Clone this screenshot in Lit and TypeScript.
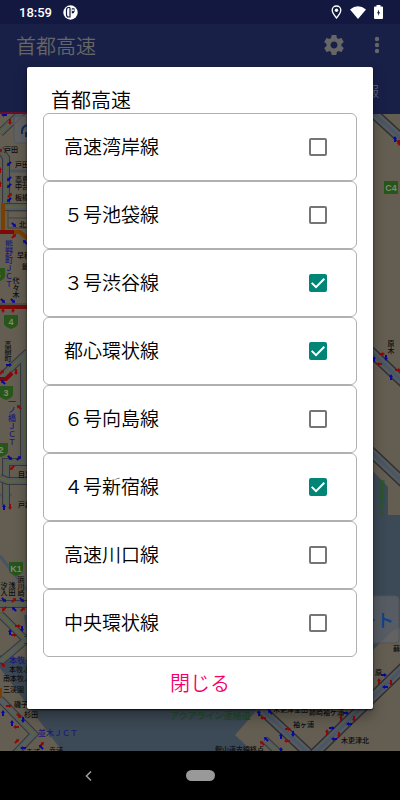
import { LitElement, html, svg, css } from "lit";
import { customElement, state, property } from "lit/decorators.js";

interface Route {
  name: string;
  shown: boolean;
}

type Arrow = [x: number, y: number, angle: number];
type Label = [x: number, y: number, text: string];

const RED_ARROWS: Arrow[] = [
  [10, 122, 180], [0, 151, 45], [0, 170, 0], [0, 184, 0], [10, 195, 45],
  [14, 236, 45], [3, 310, 180], [13, 310, 180], [2, 372, 45], [16, 372, 180],
  [19, 407, -45], [12, 468, 225], [10, 507, 180], [14, 600, 45], [4, 609, 225],
  [23, 609, 45], [18, 626, 90], [14, 635, 90], [3, 665, 135], [9, 706, 90],
  [19, 716, 135], [16, 727, 270], [17, 741, 45], [42, 744, 45], [399, 143, 180],
  [382, 354, 90], [379, 364, 270], [398, 370, 90], [379, 681, 0], [391, 683, 180],
  [341, 718, 0], [354, 719, 180], [327, 732, 0], [339, 735, 180], [288, 729, 90],
  [287, 741, 270], [263, 718, 270], [262, 743, -45],
];

const BLUE_ARROWS: Arrow[] = [
  [4, 115, 270], [9, 164, 225], [9, 179, 225], [9, 186, 225], [9, 200, 225],
  [14, 225, 135], [25, 242, 315], [3, 301, 135], [13, 301, 135], [9, 365, 90],
  [3, 382, 315], [10, 458, 135], [19, 458, 45], [4, 507, 0], [4, 600, 135],
  [22, 600, 135], [14, 609, 315], [22, 629, 180], [10, 632, 0], [3, 713, 0],
  [12, 723, 0], [23, 720, 180], [23, 748, 270], [41, 747, 315], [395, 139, 0],
  [374, 359, 0], [386, 358, 180], [391, 377, 0], [384, 675, 90], [385, 687, 270],
  [346, 713, 90], [349, 724, 270], [332, 728, 90], [334, 739, 270], [281, 736, 0],
  [293, 734, 180], [259, 713, 0], [270, 712, 315], [266, 739, 315], [281, 750, 0],
];

const PLACES: Label[] = [
  [4, 152, "戸田"], [15, 167, "戸田南"], [15, 182, "高島平"], [15, 189, "中台"],
  [15, 200, "板橋本町"], [19, 227, "北池袋"], [17, 258, "早稲田"], [22, 269, "飯田橋"],
  [18, 477, "目黒"], [18, 507, "戸越"], [9, 672, "本牧ふ頭"], [3, 681, "南本牧ふ頭"],
  [3, 692, "三渓園"], [14, 707, "磯子"], [24, 717, "杉田"], [49, 753, "幸浦"],
  [26, 755, "幸浦"], [393, 651, "蘇我"], [375, 675, "原"], [273, 712, "木更津金田"],
  [309, 715, "姉崎袖ケ浦"], [293, 727, "袖ヶ浦"], [341, 743, "木更津北"],
  [215, 752, "館山道支線終点"],
];

const UPRIGHT_PLACES: Label[] = [
  [16, 277, "代々木"], [8, 341, "高樹町"], [4, 582, "汐入"], [12, 582, "浅田"],
  [21, 576, "浜川崎"], [391, 340, "原木"],
];

const upright = ([x, y, text]: Label, kind = "place") =>
  svg`<text class="upright ${kind}" x=${x} y=${y}>${text}</text>`;

const road = (d: string, kind = "wide") => svg`
  <path class="edge ${kind}" d=${d}></path>
  <path class="bed ${kind}" d=${d}></path>
  <path class="line ${kind}" d=${d}></path>`;

const arrow = (kind: string) => ([x, y, angle]: Arrow) => svg`
  <path class=${kind} d="M0-3L2 0H1V3H-1V0H-2Z"
    transform="translate(${x} ${y}) rotate(${angle})"></path>`;

const shield = (x: number, y: number, text: string) => svg`
  <path class="shield" transform="translate(${x} ${y})"
    d="M0 0H14V9Q13 12 7 14Q1 12 0 9Z"></path>
  <text class="number" x=${x + 7} y=${y + 10}>${text}</text>`;

@customElement("road-map")
export class RoadMap extends LitElement {
  static styles = css`
    :host { display: block; overflow: hidden; background: #645e52; }
    svg { display: block; width: 100%; height: 100%; }
    text { font: 500 7px "Noto Sans CJK JP", sans-serif; fill: #0c0c0c; }
    .upright { writing-mode: vertical-rl; text-orientation: upright; }
    .jct { font-size: 8px; fill: #1a1a7c; }
    .area { font-size: 6px; fill: #245a1c; }
    .aqua { font-size: 9px; fill: #1d4d22; }
    .number { font: 700 9px "Liberation Sans", sans-serif; fill: #7c8a70; text-anchor: middle; }
    .water { fill: #3c4956; }
    .shield { fill: #28561a; }
    .edge, .bed, .line, .river { fill: none; }
    .edge { stroke: #38383a; stroke-width: 8px; }
    .bed { stroke: #565b5e; stroke-width: 6px; }
    .line { stroke: #626b2e; stroke-width: 1px; }
    .edge.coast { stroke: #303034; stroke-width: 11px; }
    .bed.coast { stroke-width: 8px; }
    .line.coast { stroke: #4a5663; stroke-width: 3px; }
    .river { stroke: #48545f; stroke-width: 3px; }
    .orange { fill: none; stroke: #7a4000; stroke-width: 4px; }
    .jam { fill: none; stroke: #7c0a0a; stroke-width: 4px; }
    .frame { fill: none; stroke: #404040; stroke-width: 1px; }
    .red { fill: #8e0808; }
    .blue { fill: #0808a0; }
    .card { fill: #62646a; fill-opacity: 0.7; stroke: #50545a; }
    .action { font-size: 18px; fill: #0d4488; }
    .faint { font-size: 8px; fill: #4a4a74; }
    .reload { fill: none; stroke: #0d2f60; stroke-width: 2px; }
  `;

  render() {
    return html`
      <svg viewBox="0 114 400 637" preserveAspectRatio="xMidYMid slice" aria-hidden="true">
        <path class="water" d="M24 615L30 660L0 655V668L62 751H252L235 735L262 704L373 650L392 631L400 628V515H388V487L373 471L300 420V600Z"></path>
        <path class="river" d="M8 171H27M0 556L27 590M0 495H12"></path>
        ${road("M0 133L24 110")}
        ${road("M0 149L6 158V203")}
        ${road("M4 207H30")}
        <path class="frame" d="M8 211H30M8 211V228H30M8 218H30"></path>
        <path class="orange" d="M3 203V231M12 232L20 232L28 239"></path>
        <path class="jam" d="M0 232H14M0 307H28"></path>
        <path class="frame" d="M0 304H28"></path>
        ${road("M0 378L28 352M24 356V462H6V505")}
        <path class="jam" d="M0 379H6L12 373"></path>
        ${road("M0 478L8 481H28")}
        ${road("M0 604H28")}
        ${road("M0 614L26 640L0 662")}
        ${road("M24 640H30")}
        ${road("M0 699L34 734L14 755")}
        <path class="orange" d="M0 688V698"></path>
        ${road("M370 110L404 141", "coast")}
        ${road("M370 351L404 383", "coast")}
        ${road("M370 451L404 483", "coast")}
        ${road("M404 667L312 756", "coast")}
        ${road("M260 708L308 753", "coast")}
        ${road("M265 740L280 754")}
        <rect class="card" x="14" y="116" width="40" height="27" rx="3"></rect>
        <path class="reload" d="M28 125Q21 126 22 134M26 132V137"></path>
        <text class="faint" x="384" y="622">千葉</text>
        <rect class="card" x="340" y="596" width="59" height="47" rx="4"></rect>
        <text class="action" x="358" y="627">ート</text>
        ${RED_ARROWS.map(arrow("red"))} ${BLUE_ARROWS.map(arrow("blue"))}
        ${shield(-9, 268, "5")} ${shield(4, 315, "4")} ${shield(-1, 386, "3")}
        ${shield(-6, 443, "2")} ${shield(9, 562, "K1")}
        <rect class="shield" x="384" y="181" width="14" height="13" rx="1"></rect>
        <text class="number" x="391" y="191">C4</text>
        ${PLACES.map(([x, y, t]) => svg`<text x=${x} y=${y}>${t}</text>`)}
        ${UPRIGHT_PLACES.map((l) => upright(l))}
        ${upright([9, 240, "熊野町ＪＣＴ"], "jct")}
        ${upright([12, 398, "一ノ橋ＪＣＴ"], "jct")}
        ${upright([382, 480, "湾岸幕張ＰＡ"], "area")}
        <text class="jct" x="9" y="663">本牧ＪＣＴ</text>
        <text class="jct" x="38" y="736">並木ＪＣＴ</text>
        <text class="aqua" x="170" y="719">アクアライン連絡道</text>
      </svg>
    `;
  }
}

@customElement("route-row")
export class RouteRow extends LitElement {
  @property({ attribute: false }) route!: Route;

  static styles = css`
    :host { display: block; }
    .row {
      display: flex;
      align-items: center;
      justify-content: space-between;
      box-sizing: border-box;
      height: 68px;
      padding: 0 29px 0 20px;
      border: 1px solid #b0b0b0;
      border-radius: 6px;
      font-size: 19px;
      font-weight: 350;
      color: #000;
    }
    .name { line-height: 28px; padding-bottom: 2px; }
    .box {
      appearance: none;
      display: grid;
      place-items: center;
      box-sizing: border-box;
      flex: none;
      width: 18px;
      height: 18px;
      margin: 0;
      border: 2px solid #757575;
      border-radius: 2px;
      background: #fff;
    }
    .box:checked { border-color: #008577; background: #008577; }
    .box:checked::before {
      content: "";
      width: 14px;
      height: 14px;
      background: #fff;
      clip-path: polygon(0 54%, 10% 44%, 36% 69%, 90% 15%, 100% 25%, 36% 89%);
    }
  `;

  private toggle(e: Event) {
    const shown = (e.target as HTMLInputElement).checked;
    this.dispatchEvent(new CustomEvent("route-toggle", { detail: shown }));
  }

  render() {
    return html`
      <label class="row">
        <span class="name">${this.route.name}</span>
        <input class="box" type="checkbox" .checked=${this.route.shown} @change=${this.toggle} />
      </label>
    `;
  }
}

@customElement("app-root")
export class AppRoot extends LitElement {
  @state() private open = true;

  @state() private routes: Route[] = [
    { name: "高速湾岸線", shown: false },
    { name: "５号池袋線", shown: false },
    { name: "３号渋谷線", shown: true },
    { name: "都心環状線", shown: true },
    { name: "６号向島線", shown: false },
    { name: "４号新宿線", shown: true },
    { name: "高速川口線", shown: false },
    { name: "中央環状線", shown: false },
  ];

  static styles = css`
    :host {
      display: flex;
      flex-direction: column;
      position: relative;
      min-height: 100vh;
      font-family: "Noto Sans CJK JP", sans-serif;
    }
    button { padding: 0; border: 0; background: none; font: inherit; cursor: pointer; }
    svg { display: block; }
    .status {
      display: flex;
      align-items: center;
      gap: 11px;
      height: 24px;
      padding: 0 17px 0 19px;
      background: #12183f;
      color: #fff;
    }
    .time { padding-top: 2px; font: 500 13px/22px Roboto, sans-serif; }
    .signals { display: flex; align-items: center; gap: 8px; margin-left: auto; }
    .toolbar {
      display: flex;
      align-items: center;
      height: 42px;
      padding: 0 14px 0 16px;
      background: #192048;
      color: #666;
    }
    .heading {
      flex: 1;
      margin: 0;
      padding-top: 2px;
      font-size: 20px;
      font-weight: 350;
      line-height: 24px;
    }
    .tool { display: grid; place-items: center; height: 24px; color: inherit; }
    .gear { margin-right: 22px; }
    .tabs {
      display: grid;
      grid-template-columns: 1fr 1fr;
      height: 48px;
      background: #192048;
    }
    .tab { padding-right: 21px; color: #5a5e76; font-size: 14px; text-align: right; }
    .tab.current { border-bottom: 2px solid #66102e; }
    .map { flex: 1 1 0; min-height: 0; }
    .nav {
      display: grid;
      grid-template-columns: 1fr auto 1fr;
      align-items: center;
      height: 49px;
      background: #000;
    }
    .back { justify-self: end; margin-right: 87px; }
    .home { width: 29px; height: 11px; border-radius: 6px; background: #999; }
    .overlay {
      position: absolute;
      inset: 25px 0 49px;
      display: grid;
      align-items: center;
      padding: 0 27px;
    }
    .dialog {
      box-sizing: border-box;
      padding: 0 16px;
      border-radius: 2px;
      background: #fff;
      box-shadow: 0 8px 14px rgba(0, 0, 0, 0.3), 0 1px 2px rgba(0, 0, 0, 0.8);
    }
    .title {
      margin: 0;
      padding: 20px 8px 0;
      font-size: 20px;
      font-weight: 350;
      line-height: 26px;
      color: #000;
    }
    .close {
      display: block;
      width: 100%;
      height: 52px;
      padding-bottom: 2px;
      font-size: 20px;
      font-weight: 350;
      color: #f5006a;
    }
  `;

  private setShown(index: number, shown: boolean) {
    this.routes = this.routes.map((r, i) => (i === index ? { ...r, shown } : r));
  }

  render() {
    return html`
      <div class="status">
        <span class="time">18:59</span>
        <svg width="15" height="15" viewBox="0 0 15 15" aria-hidden="true">
          <circle cx="7.500" cy="7.500" r="7.200" fill="#fff"></circle>
          <path d="M7 2.500H5.500Q3.500 2.500 3.500 5V9.500Q3.500 12 5.500 12H7V2.500" fill="none" stroke="#12183f" stroke-width="1.200"></path>
          <path d="M8.800 3.300H11.500V6.500Q11.500 8.500 8.800 8.500Z" fill="#12183f"></path>
          <circle cx="10" cy="5.200" r="1" fill="#fff"></circle>
        </svg>
        <div class="signals">
          <svg width="11" height="14" viewBox="0 0 11 14" aria-hidden="true">
            <path d="M5.500 1C3 1 1.200 2.800 1.200 5.100C1.200 8 5.500 13 5.500 13S9.800 8 9.800 5.100C9.800 2.800 8 1 5.500 1Z" fill="none" stroke="#fff" stroke-width="1.300"></path>
            <circle cx="5.500" cy="5.200" r="1.700" fill="#fff"></circle>
          </svg>
          <svg width="16" height="13" viewBox="0 0 16 13" aria-hidden="true">
            <path d="M0 3.500Q8-3 16 3.500L8 13Z" fill="#fff"></path>
          </svg>
          <svg width="9" height="14" viewBox="0 0 9 14" aria-hidden="true">
            <path d="M2.500 0H6.500V1.500H8Q9 1.500 9 2.500V13Q9 14 8 14H1Q0 14 0 13V2.500Q0 1.500 1 1.500H2.500Z" fill="#fff"></path>
            <path d="M5 4.500L3 8.300H4.200V11L6 7.200H5Z" fill="#12183f"></path>
          </svg>
        </div>
      </div>

      <header class="toolbar">
        <h1 class="heading">首都高速</h1>
        <button class="tool gear" aria-label="設定">
          <svg width="24" height="24" viewBox="0 0 24 24" fill="currentColor" aria-hidden="true">
            <path d="M19.430 12.980c.040-.320.070-.640.070-.980s-.030-.660-.070-.980l2.110-1.650c.190-.150.240-.420.120-.640l-2-3.460c-.120-.220-.390-.300-.610-.220l-2.490 1c-.520-.400-1.080-.730-1.690-.980l-.380-2.650A.488.488 0 0 0 14 2h-4c-.250 0-.460.180-.490.420l-.380 2.650c-.610.250-1.170.590-1.690.980l-2.490-1c-.230-.090-.490 0-.610.220l-2 3.460c-.130.220-.070.490.120.640l2.110 1.650c-.040.320-.070.650-.070.980s.030.660.070.980l-2.110 1.650c-.190.150-.240.420-.120.640l2 3.460c.120.220.390.300.610.220l2.490-1c.520.400 1.080.730 1.690.980l.380 2.650c.030.240.240.420.490.420h4c.250 0 .460-.180.490-.420l.380-2.650c.610-.250 1.170-.590 1.690-.980l2.490 1c.230.090.490 0 .610-.220l2-3.460c.120-.220.070-.490-.120-.640l-2.110-1.650zM12 15.500c-1.930 0-3.500-1.570-3.500-3.500s1.570-3.500 3.500-3.500 3.500 1.570 3.500 3.500-1.570 3.500-3.500 3.500z"></path>
          </svg>
        </button>
        <button class="tool" aria-label="その他のオプション">
          <svg width="18" height="18" viewBox="0 0 18 18" fill="currentColor" aria-hidden="true">
            <circle cx="9" cy="3" r="2.200"></circle>
            <circle cx="9" cy="9" r="2.200"></circle>
            <circle cx="9" cy="15" r="2.200"></circle>
          </svg>
        </button>
      </header>

      <nav class="tabs">
        <button class="tab current" aria-label="地図"></button>
        <button class="tab">情報</button>
      </nav>

      <road-map class="map"></road-map>

      <footer class="nav">
        <button class="back" aria-label="戻る">
          <svg width="20" height="16" viewBox="0 0 20 16" aria-hidden="true">
            <path d="M12 3.500L7.500 8L12 12.500" fill="none" stroke="#999" stroke-width="1.600"></path>
          </svg>
        </button>
        <button class="home" aria-label="ホーム"></button>
      </footer>

      ${this.open
        ? html`
            <div class="overlay">
              <section class="dialog" role="dialog" aria-modal="true" aria-labelledby="dialog-title">
                <h2 class="title" id="dialog-title">首都高速</h2>
                ${this.routes.map(
                  (r, i) => html`<route-row .route=${r}
                    @route-toggle=${(e: CustomEvent<boolean>) => this.setShown(i, e.detail)}></route-row>`
                )}
                <button class="close" @click=${() => (this.open = false)}>閉じる</button>
              </section>
            </div>
          `
        : null}
    `;
  }
}
